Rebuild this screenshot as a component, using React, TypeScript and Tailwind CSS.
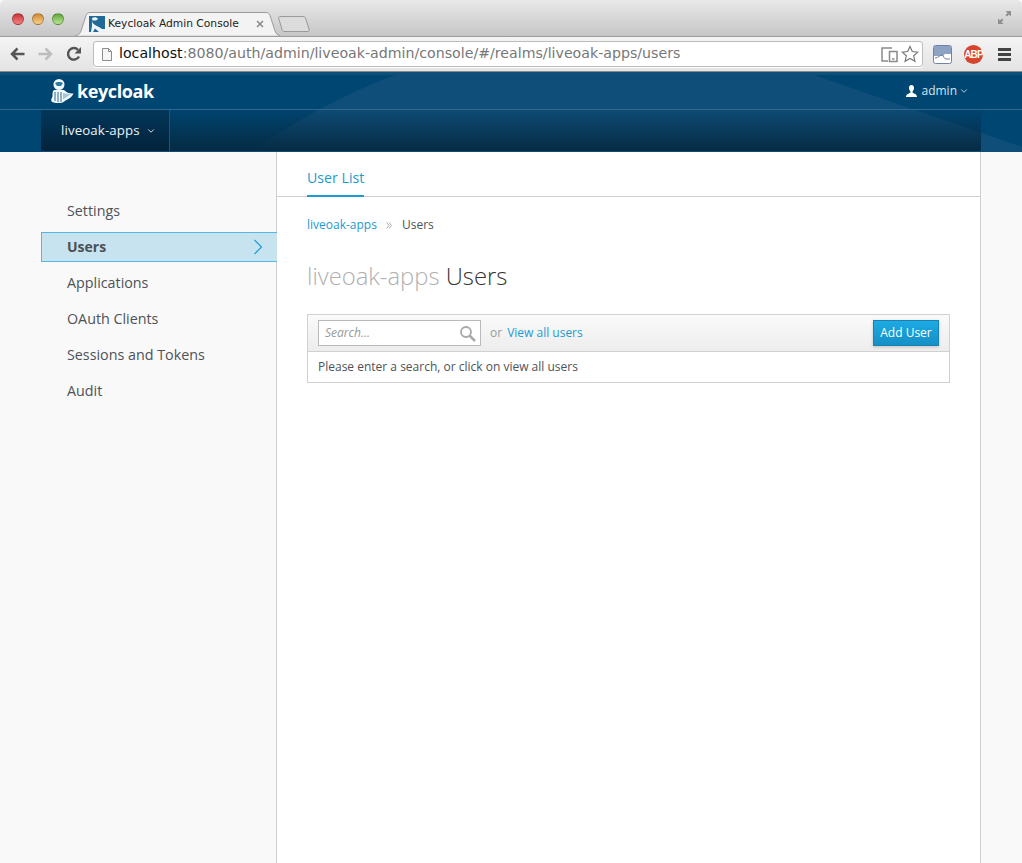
import { ChevronDown } from "lucide-react";

const navItems = ["Settings", "Users", "Applications", "OAuth Clients", "Sessions and Tokens", "Audit"];

const Light = ({ colors }: { colors: string }) => (
  <div className={`w-[12px] h-[12px] rounded-full border border-black/25 ${colors}`} />
);

const Mascot = () => (
  <svg width="24" height="26" viewBox="0 0 24 26" fill="none">
    <circle cx="9" cy="6.500" r="5.500" fill="#f3f8fb" />
    <path d="M5 5c1.500-1.500 6.500-1.500 8 0l-2 3H7z" fill="#2a7aa6" />
    <path d="M4 12h10c2 2 5 4 9.500 3.500-1 3-4 5-8 7-2 1.500-3 2.500-5 2.500-4 0-8 0-9-2-1-2 1-3 1-5 0-3 0-5 1.500-6z" fill="#f3f8fb" />
    <path d="M5 14v9M8 14v10M11 14v10" stroke="#2a6f98" strokeWidth="1" />
    <path d="M13 15l7.500 1.500-7.500 5z" fill="#a9c6d8" />
  </svg>
);

const Favicon = () => (
  <svg width="16" height="16" viewBox="0 0 16 16">
    <rect width="16" height="16" fill="#1f6a96" />
    <path d="M3 2c2-1 5-1 6 1L7 4.500H3.500z" fill="#eef3f6" />
    <path d="M3 5.500c1 3 4 4 7 5.500l3 2h3v3H10L6 12.500 4 16H2l1-6z" fill="#eef3f6" />
  </svg>
);

export default function App() {
  return (
    <div className="w-full h-[863px] overflow-hidden flex flex-col bg-[#f9f9f9] font-['Open_Sans',sans-serif] text-[#4d5258]">
      {/* browser chrome */}
      <div className="h-[36px] flex items-center bg-gradient-to-b from-[#e9e9e9] to-[#c6c6c6] rounded-t-[5px]">
        <div className="flex gap-[8px] ml-[12px] mt-[2px]">
          <Light colors="bg-gradient-to-b from-[#c5323b] to-[#f77f80]" />
          <Light colors="bg-gradient-to-b from-[#d08a2e] to-[#fbd088]" />
          <Light colors="bg-gradient-to-b from-[#5ea63c] to-[#b8e890]" />
        </div>
        <div className="relative self-end ml-[11px] w-[205px] h-[24px] flex items-center pl-[14px]">
          <svg className="absolute inset-0" width="205" height="24" viewBox="0 0 205 24">
            <path d="M0 23.500C4 23 5 21.500 6 19L11 3.500C12 1.200 13 .500 16 .500H190C193 .500 194 1.200 195 3.500L200 19C201 21.500 202 23 205 23.500" fill="#f3f3f3" stroke="#9c9c9c" />
          </svg>
          <div className="relative flex items-center w-full">
            <Favicon />
            <span className="ml-[3px] text-[10.700px] text-[#222] font-['DejaVu_Sans',sans-serif] whitespace-nowrap">Keycloak Admin Console</span>
            <svg className="ml-[17px]" width="8" height="8" viewBox="0 0 8 8" stroke="#888" strokeWidth="1.500">
              <path d="M1 1l6 6M7 1L1 7" />
            </svg>
          </div>
        </div>
        <svg className="self-end mb-[4px] -ml-[3px]" width="34" height="16" viewBox="0 0 34 16" fill="#dcdcdc" stroke="#9a9a9a">
          <path d="M1.500 1.500C1.500 1 2 .500 3 .500H26C27 .500 28 1 28.500 2L32 13C32.500 14.500 32 15.500 31 15.500H8C6 15.500 5.500 15 5 13.500z" />
        </svg>
        <svg className="ml-auto mr-[10px] mb-[2px]" width="15" height="15" viewBox="0 0 15 15" fill="#8f8f8f">
          <path d="M8.500 1H14v5.500L12 4.500 10 6.500 8.500 5 10.500 3z" />
          <path d="M1 8.500V14h5.500L4.500 12l2-2L5 8.500 3 10.500z" />
        </svg>
      </div>
      <div className="h-[36px] flex items-center border-t border-b border-t-[#9d9d9d] border-b-[#8a8a8a] bg-gradient-to-b from-[#f4f4f4] to-[#e4e4e4]">
        <svg className="ml-[10px]" width="15" height="14" viewBox="0 0 15 14" fill="none" stroke="#555" strokeWidth="2.500">
          <path d="M14.500 7H2.500M7.500 1.500L2 7l5.500 5.500" />
        </svg>
        <svg className="ml-[13px]" width="15" height="14" viewBox="0 0 15 14" fill="none" stroke="#bdbdbd" strokeWidth="2.500">
          <path d="M.500 7h12M7.500 1.500L13 7l-5.500 5.500" />
        </svg>
        <svg className="ml-[13px]" width="16" height="16" viewBox="0 0 16 16" fill="none">
          <path d="M13 10.500A5.800 5.800 0 1 1 12 3.800" stroke="#555" strokeWidth="2.400" />
          <path d="M15 1v6.500H8.500z" fill="#555" />
        </svg>
        <div className="ml-[11px] w-[830px] h-[26px] flex items-center bg-white border border-[#bcbcbc] rounded-[3px] shadow-[0_1px_0_#fff]">
          <svg className="ml-[7px]" width="12" height="15" viewBox="0 0 12 15" fill="#f6f6f6" stroke="#8c8c8c">
            <path d="M1.500 1.500h6l3 3v9h-9z" />
            <path d="M7.500 1.500v3h3" fill="none" />
          </svg>
          <span className="ml-[6px] text-[14.180px] text-[#777] font-['DejaVu_Sans',sans-serif] whitespace-nowrap">
            <span className="text-[#111]">localhost</span>:8080/auth/admin/liveoak-admin/console/#/realms/liveoak-apps/users
          </span>
          <svg className="ml-auto" width="17" height="17" viewBox="0 0 17 17" fill="none" stroke="#8a8a8a" strokeWidth="1.500">
            <path d="M11 2H1v13h6M8.500 5.500h7.500v10H8.500zM11 13h2.500" />
          </svg>
          <svg className="ml-[3px] mr-[3px]" width="18" height="18" viewBox="0 0 18 18" fill="#fff" stroke="#777" strokeWidth="1.200">
            <path d="M9 1.500l2.300 5 5.500.600-4.100 3.700 1.200 5.400L9 13.400 4.100 16.200l1.200-5.400L1.200 7.100l5.500-.600z" />
          </svg>
        </div>
        <svg className="ml-[10px]" width="19" height="19" viewBox="0 0 19 19">
          <rect x=".500" y=".500" width="18" height="18" rx="2" fill="#fff" stroke="#6f83a3" />
          <path d="M1 1h17v8h-5l-1 0c-1 0-1 2-2 2H1z" fill="#8ea3c4" />
          <path d="M2 13c3 0 5-3 7-3 2 1 2 4 4 4h4" fill="none" stroke="#6f83a3" />
        </svg>
        <div className="ml-[12px] w-[19px] h-[19px] rounded-full bg-[#d8452e] flex items-center justify-center">
          <span className="text-white text-[10px] font-bold font-['Liberation_Sans',sans-serif] tracking-[-0.8px]">ABP</span>
        </div>
        <div className="ml-[15px] flex flex-col gap-[2px]">
          <div className="w-[13px] h-[3px] bg-[#444]" />
          <div className="w-[13px] h-[3px] bg-[#444]" />
          <div className="w-[13px] h-[3px] bg-[#444]" />
        </div>
      </div>

      {/* console header */}
      <div className="relative h-[80px] bg-[#004673] flex flex-col text-white">
        <svg className="absolute inset-0" width="1022" height="80" viewBox="0 0 1022 80">
          <path d="M252 80Q316 33 395 3L425 0H805L1022 75V80z" fill="#0f4e79" />
          <rect width="1022" height="3" fill="#0f5078" />
        </svg>
        <div className="h-[38px] flex items-center border-b border-[#33688c] relative">
          <div className="ml-[50px] mt-[1px] flex items-center">
            <Mascot />
            <span className="ml-[3px] -mt-[1px] text-[18px] font-bold tracking-[-0.4px] leading-none">keycloak</span>
          </div>
          <div className="ml-auto mr-[53px] flex items-center text-[12px] text-[#d8e4ec]">
            <svg width="11" height="12" viewBox="0 0 11 12" fill="#fff">
              <path d="M5.500 0C7.200 0 8 1.300 8 3c0 1.500-.7 2.800-1.400 3.500v1.200C8 8.400 11 9 11 12H0c0-3 3-3.600 4.400-4.300V6.500C3.700 5.800 3 4.500 3 3c0-1.700.8-3 2.500-3z" />
            </svg>
            <span className="ml-[4px]">admin</span>
            <ChevronDown size={10} className="ml-[2px]" />
          </div>
        </div>
        <div className="ml-[41px] mr-[41px] flex-1 flex border-b border-[#0d4d75] bg-gradient-to-b from-[#052b44]/10 to-[#052b44] relative">
          <div className="w-[129px] border-r border-[#1e5475] flex items-center pl-[20px] bg-gradient-to-b from-[#03365a] to-[#02233b]">
            <span className="text-[13.300px] font-medium text-[#eef3f6] tracking-[0.1px]">liveoak-apps</span>
            <ChevronDown size={10} className="ml-[6px]" />
          </div>
        </div>
      </div>

      {/* page */}
      <div className="flex-1 flex min-h-0">
        <div className="w-[277px] shrink-0 border-r border-[#cfcfcf] pl-[41px] pt-[41px] text-[14.300px]">
          {navItems.map((item) =>
            item === "Users" ? (
              <div key={item} className="h-[30px] my-[3px] -mr-[1px] flex items-center pl-[25px] pb-[1px] bg-[#c7e3f0] border border-[#57b6e2] border-r-0 text-[14px] font-bold text-[#4a5055]">
                Users
                <svg className="ml-auto mr-[14px]" width="10" height="16" viewBox="0 0 10 16" fill="none" stroke="#1f9fd8" strokeWidth="1.200">
                  <path d="M1.500 1l7 7-7 7" />
                </svg>
              </div>
            ) : (
              <div key={item} className="h-[36px] flex items-center pl-[26px] pb-[1px]">{item}</div>
            )
          )}
        </div>
        <div className="w-[704px] shrink-0 bg-white border-r border-[#cfcfcf]">
          <div className="h-[45px] border-b border-[#cfcfcf] pl-[30px] flex items-end">
            <div className="h-[29px] -mb-[1px] border-b-2 border-[#1a9bd2] text-[14.200px] text-[#1a9bd2] leading-[20px]">User List</div>
          </div>
          <div className="pl-[30px] pr-[30px]">
            <div className="mt-[19px] flex items-center text-[12px] leading-[18px]">
              <span className="text-[#1a9bd2]">liveoak-apps</span>
              <ChevronsGlyph />
              <span>Users</span>
            </div>
            <h1 className="mt-[25px] text-[23.800px] font-light leading-[34px] text-[#333]">
              <span className="text-[#b0b0b0]">liveoak-apps</span> Users
            </h1>
            <div className="mt-[21px] border border-[#d1d1d1] text-[12px]">
              <div className="h-[37px] flex items-center px-[10px] border-b border-[#d1d1d1] bg-gradient-to-b from-[#fafafa] to-[#ededed]">
                <div className="w-[163px] h-[26px] flex items-center bg-white border border-[#bababa] pl-[6px] pr-[4px]">
                  <span className="italic text-[#999]">Search...</span>
                  <svg className="ml-auto" width="17" height="17" viewBox="0 0 17 17" fill="none" stroke="#a8a8a8">
                    <circle cx="7" cy="7" r="5" strokeWidth="1.800" />
                    <path d="M10.500 10.500L16 16" strokeWidth="2.500" />
                  </svg>
                </div>
                <span className="ml-[9px] text-[#999]">or</span>
                <span className="ml-[5px] text-[#1a9bd2]">View all users</span>
                <div className="ml-auto w-[66px] h-[26px] flex items-center justify-center bg-gradient-to-b from-[#1eaae4] to-[#1590c6] border border-[#1782b3] text-white font-medium shadow-[0_1px_3px_rgba(0,0,0,0.2)]">
                  Add User
                </div>
              </div>
              <div className="h-[30px] flex items-center px-[10px]">Please enter a search, or click on view all users</div>
            </div>
          </div>
        </div>
      </div>
    </div>
  );
}

function ChevronsGlyph() {
  return (
    <svg className="ml-[9px] mr-[10px]" width="6" height="7" viewBox="0 0 6 7" fill="none" stroke="#aaa">
      <path d="M.500 .500l2.500 3-2.500 3M3 .500l2.500 3-2.500 3" />
    </svg>
  );
}
